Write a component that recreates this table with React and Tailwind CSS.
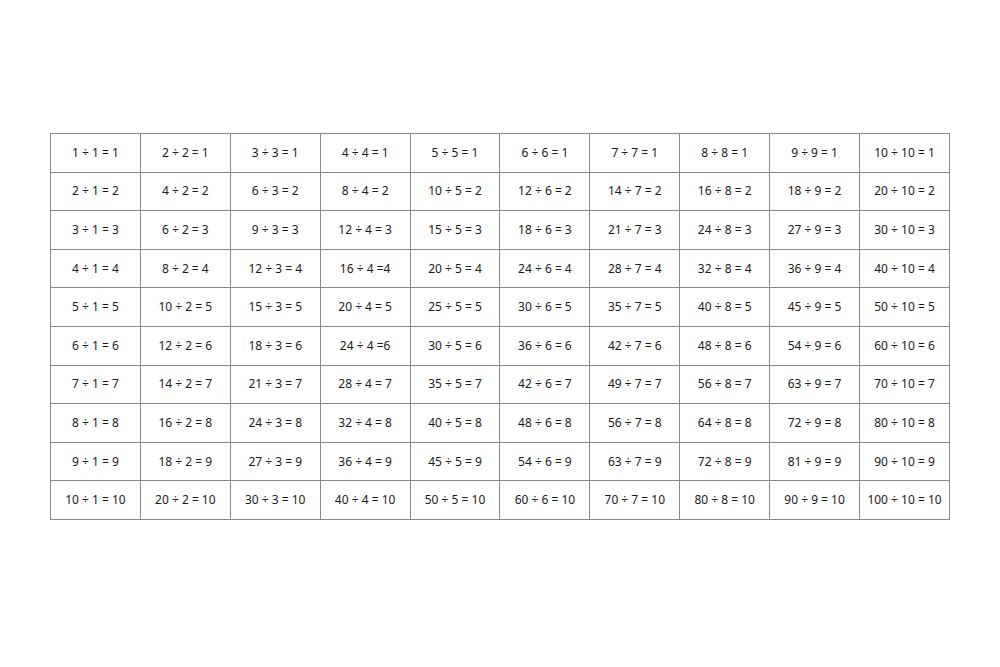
import React from "react";

export default function App() {
  const rows = [];
  for (let q = 1; q <= 10; q++) {
    const cells = [];
    for (let d = 1; d <= 10; d++) {
      let text = `${q * d} ÷ ${d} = ${q}`;
      if (d === 4 && q === 4) text = "16 ÷ 4 =4";
      if (d === 4 && q === 6) text = "24 ÷ 4 =6";
      cells.push(text);
    }
    rows.push(cells);
  }
  return (
    <div className="w-[1000px] h-[667px] bg-white pt-[133px] pl-[50px]" style={{ fontFamily: '"Noto Sans", "DejaVu Sans", sans-serif' }}>
      <table className="w-[900px] border-collapse border border-[#6e6e6e] text-[12px] text-[#1a1a1a]">
        <tbody>
          {rows.map((r, i) => (
            <tr key={i} className="h-[38.6px]">
              {r.map((t, j) => (
                <td key={j} className="w-[90px] border border-[#8a8a8a] text-center p-0 whitespace-pre">
                  {t}
                </td>
              ))}
            </tr>
          ))}
        </tbody>
      </table>
    </div>
  );
}
